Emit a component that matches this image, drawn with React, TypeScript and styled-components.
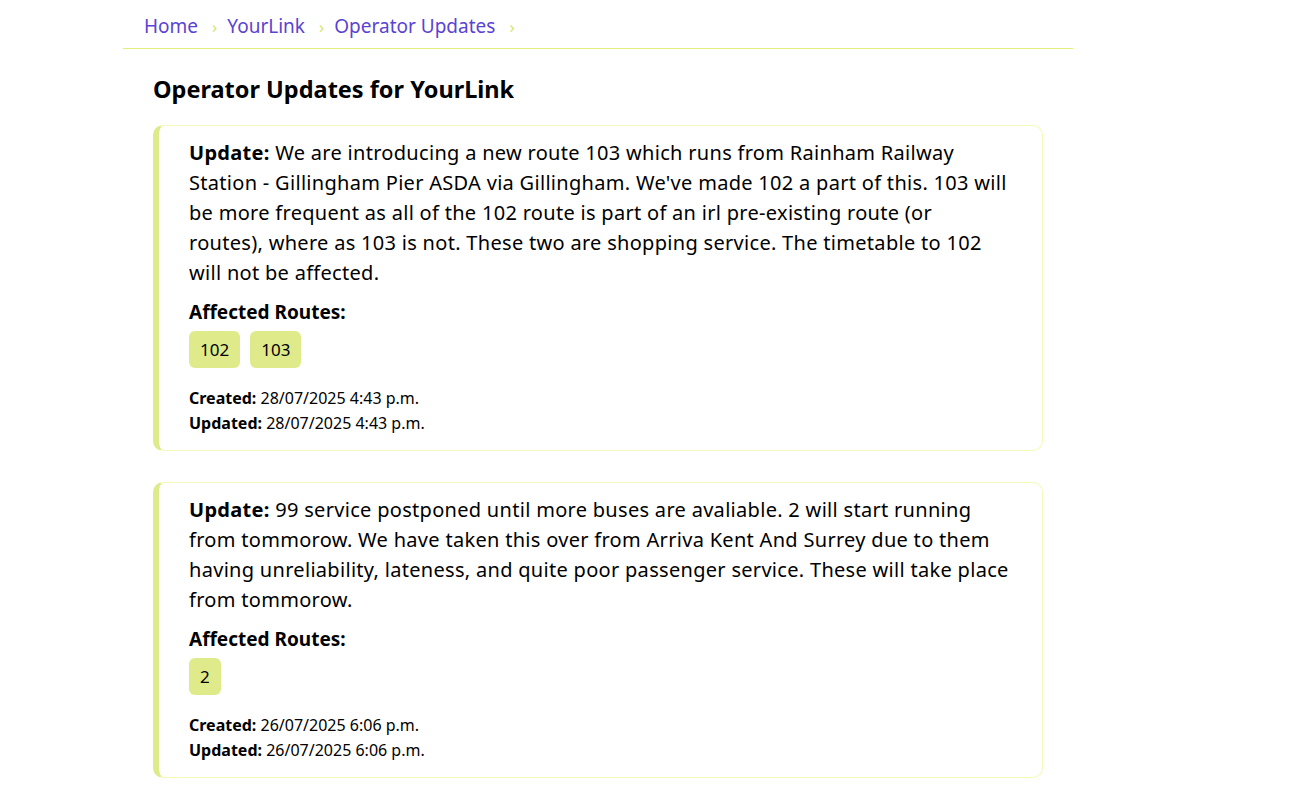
import styled, { createGlobalStyle } from 'styled-components';

const GlobalStyle = createGlobalStyle`
    body {
        margin: 0;
        background: #ffffff;
        font-family: "Noto Sans", "Open Sans", sans-serif;
        color: #000;
    }
`

const Page = styled.div`
    width: 950px;
    margin-left: 123px;
`

const Crumbs = styled.nav`
    display: flex;
    align-items: center;
    height: 49px;
    padding-left: 21px;
    padding-top: 4px;
    border-bottom: 1px solid #e3ef7c;
    box-sizing: border-box;
    font-size: 19px;
`

const Crumb = styled.a`
    color: #5a43d3;
    text-decoration: none;
`

const Chevron = styled.span`
    color: #d5e46c;
    font-size: 17px;
    margin: 0 10px 0 14px;
`

const Main = styled.main`
    padding: 0 30px;
`

const Title = styled.h1`
    font-size: 23.5px;
    font-weight: 700;
    margin: 24px 0 20px;
    line-height: 32px;
`

const Card = styled.article`
    width: 890px;
    box-sizing: border-box;
    border: 1px solid #f6f9b8;
    border-left: 6px solid #dfeb8a;
    border-radius: 10px;
    padding: 12px 31px 14px 30px;
    margin-bottom: 31px;
`

const Body = styled.p`
    font-size: 20px;
    line-height: 30px;
    letter-spacing: 0.3px;
    margin: 0 0 11px;
`

const Label = styled.h3`
    font-size: 19px;
    font-weight: 700;
    margin: 0 0 6px;
    line-height: 26px;
`

const Tags = styled.div`
    display: flex;
    gap: 10px;
    margin-bottom: 18px;
`

const Tag = styled.span`
    background: #dfeb8a;
    border-radius: 6px;
    font-size: 17px;
    height: 37px;
    line-height: 37px;
    padding: 0 11px;
`

const Meta = styled.div`
    font-size: 16px;
    line-height: 25px;
`

type Update = {
    text: string;
    routes: string[];
    created: string;
    updated: string;
}

const updates: Update[] = [
    {
        text: "We are introducing a new route 103 which runs from Rainham Railway Station - Gillingham Pier ASDA via Gillingham. We've made 102 a part of this. 103 will be more frequent as all of the 102 route is part of an irl pre-existing route (or routes), where as 103 is not. These two are shopping service. The timetable to 102 will not be affected.",
        routes: ['102', '103'],
        created: '28/07/2025 4:43 p.m.',
        updated: '28/07/2025 4:43 p.m.',
    },
    {
        text: "99 service postponed until more buses are avaliable. 2 will start running from tommorow. We have taken this over from Arriva Kent And Surrey due to them having unreliability, lateness, and quite poor passenger service. These will take place from tommorow.",
        routes: ['2'],
        created: '26/07/2025 6:06 p.m.',
        updated: '26/07/2025 6:06 p.m.',
    },
]

export default function App() {
    return <>
        <GlobalStyle />
        <Page>
            <Crumbs>
                <Crumb href="#">Home</Crumb><Chevron>›</Chevron>
                <Crumb href="#">YourLink</Crumb><Chevron>›</Chevron>
                <Crumb href="#">Operator Updates</Crumb><Chevron>›</Chevron>
            </Crumbs>
            <Main>
                <Title>Operator Updates for YourLink</Title>
                {updates.map((u, i) => (
                    <Card key={i}>
                        <Body><b>Update:</b> {u.text}</Body>
                        <Label>Affected Routes:</Label>
                        <Tags>{u.routes.map(r => <Tag key={r}>{r}</Tag>)}</Tags>
                        <Meta><b>Created:</b> {u.created}</Meta>
                        <Meta><b>Updated:</b> {u.updated}</Meta>
                    </Card>
                ))}
            </Main>
        </Page>
    </>;
}
